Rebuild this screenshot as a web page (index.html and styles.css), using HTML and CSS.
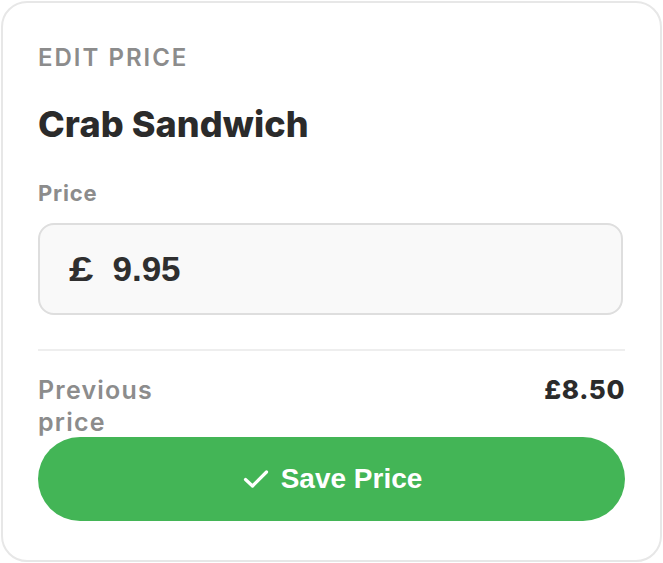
FILE: index.html
```html
<!DOCTYPE html>
<html lang="en">
<head>
<meta charset="utf-8">
<title>Edit Price</title>
<link rel="stylesheet" href="styles.css">
</head>
<body>
<div class="card">
  <div class="eyebrow">EDIT PRICE</div>
  <h1 class="title">Crab Sandwich</h1>
  <label class="field-label">Price</label>
  <div class="price-input">
    <span class="currency">£</span>
    <span class="amount">9.95</span>
  </div>
  <div class="divider"></div>
  <div class="prev-row">
    <div class="prev-label">Previous price</div>
    <div class="prev-value">£8.50</div>
  </div>
  <button class="save-btn">
    <svg class="check" viewBox="0 0 26 18" width="26" height="18"><path d="M2.5 9.5 L9.5 16 L23.5 2" fill="none" stroke="#fff" stroke-width="3.2" stroke-linecap="round" stroke-linejoin="round"/></svg>
    <span>Save Price</span>
  </button>
</div>
</body>
</html>
```
FILE: styles.css
```css
html, body {
  margin: 0;
  padding: 0;
  background: #ffffff;
}
body {
  width: 663px;
  height: 563px;
  overflow: hidden;
}
.card {
  box-sizing: border-box;
  margin: 1px;
  width: 661px;
  height: 561px;
  border: 2px solid #e7e7e7;
  border-radius: 26px;
  padding: 40px 35px 0 35px;
  display: flex;
  flex-direction: column;
  font-family: Inter, "Noto Sans", sans-serif;
}
.eyebrow {
  font-size: 24px;
  font-weight: 600;
  letter-spacing: 2px;
  color: #8c8c8c;
  line-height: 30px;
}
.title {
  margin: 29px 0 0 0;
  font-size: 36px;
  font-weight: 800;
  letter-spacing: 0.1px;
  color: #2b2b2b;
  line-height: 44px;
}
.field-label {
  margin: 34px 0 0 0;
  font-size: 22px;
  font-weight: 700;
  letter-spacing: 0.8px;
  color: #8c8c8c;
  line-height: 26px;
}
.price-input {
  margin: 17px 2px 0 0;
  box-sizing: border-box;
  height: 92px;
  border: 2px solid #dedede;
  border-radius: 16px;
  background: #f9f9f9;
  display: flex;
  align-items: center;
  padding-left: 29px;
  gap: 24px;
  font-family: "Liberation Sans", Arial, sans-serif;
  font-weight: 700;
  font-size: 35px;
  color: #2f2f2f;
}
.currency {
  display: inline-block;
  transform: scaleX(1.25);
  transform-origin: left center;
}
.divider {
  margin-top: 34px;
  height: 2px;
  background: #eeeeee;
}
.prev-row {
  margin-top: 23px;
  display: flex;
  justify-content: space-between;
  align-items: flex-start;
  height: 63px;
}
.prev-label {
  max-width: 160px;
  font-size: 25px;
  font-weight: 600;
  letter-spacing: 1.2px;
  color: #8c8c8c;
  line-height: 32px;
}
.prev-value {
  font-size: 26px;
  font-weight: 800;
  letter-spacing: 0.6px;
  color: #2b2b2b;
  line-height: 32px;
}
.save-btn {
  margin: 0;
  height: 84px;
  border: none;
  border-radius: 42px;
  background: #43b556;
  color: #ffffff;
  display: flex;
  align-items: center;
  justify-content: center;
  gap: 12px;
  font-family: "Liberation Sans", Arial, sans-serif;
  font-weight: 700;
  font-size: 28px;
  padding: 0 0 0 2px;
}
.check {
  display: block;
}
```
